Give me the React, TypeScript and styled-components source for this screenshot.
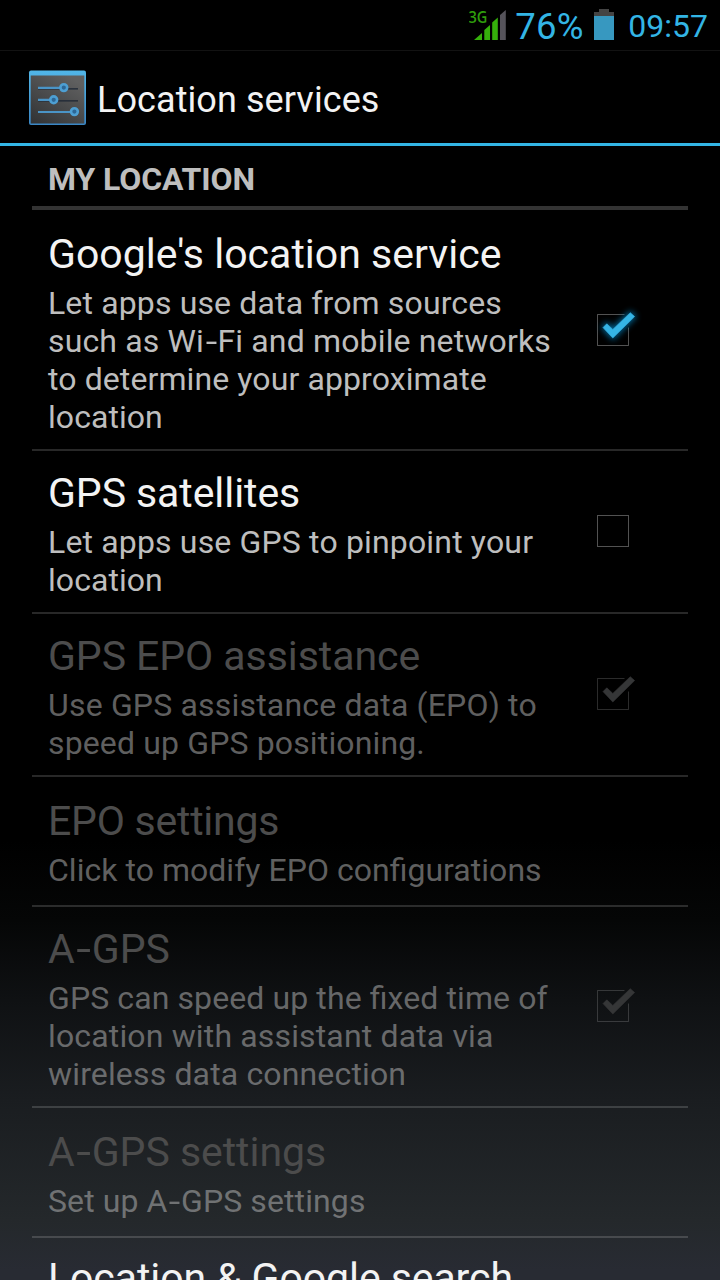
import React from 'react';
import styled, { createGlobalStyle } from 'styled-components';

const Global = createGlobalStyle`
  * { box-sizing: border-box; }
  html, body { margin: 0; background: #000; overflow: hidden; }
`;

const Screen = styled.div`
  width: 720px;
  height: 1280px;
  overflow: hidden;
  display: flex;
  flex-direction: column;
  font-family: Roboto, sans-serif;
  color: #f3f3f3;
  background: linear-gradient(180deg, #000 0, #000 840px, #050606 920px, #0f1113 1000px, #1a1d20 1100px, #24282b 1220px, #282b33 1270px, #282b33 1280px);
`;

const StatusBar = styled.div`
  height: 51px;
  flex: none;
  display: flex;
  justify-content: flex-end;
  align-items: center;
  padding-right: 12px;
  background: #000;
  border-bottom: 1px solid #121212;
  color: #33b5e5;
`;

const Signal = styled.svg`
  width: 38px;
  height: 50px;
  margin-right: 8px;
`;

const Percent = styled.span`
  font-size: 36.5px;
  width: 69px;
  line-height: 46px;
  padding-top: 4px;
  letter-spacing: 0.2px;
  white-space: nowrap;
`;

const Battery = styled.svg`
  width: 20px;
  height: 32px;
  margin: 0 14px 0 10px;
`;

const Clock = styled.span`
  font-size: 32px;
  line-height: 48px;
  padding-top: 1px;
`;

const ActionBar = styled.header`
  height: 95px;
  flex: none;
  display: flex;
  align-items: center;
  padding-left: 28px;
  background: #000;
  border-bottom: 3px solid #33b5e5;
`;

const AppIcon = styled.svg`
  width: 58px;
  height: 58px;
  margin-right: 11px;
`;

const Title = styled.h1`
  margin: 0;
  padding-top: 6px;
  font-size: 36px;
  font-weight: 400;
  line-height: 48px;
  letter-spacing: 0.08px;
`;

const List = styled.main`
  flex: 1;
  min-height: 0;
  padding: 0 32px;
`;

const Category = styled.h2`
  margin: 0;
  height: 64px;
  padding: 14px 16px 0;
  font-size: 32px;
  line-height: 38px;
  font-weight: 700;
  letter-spacing: -0.1px;
  color: #bebebe;
  border-bottom: 4px solid #333;
`;

const Row = styled.section<{ $h: number; $single?: boolean }>`
  height: ${(p) => p.$h}px;
  display: flex;
  align-items: ${(p) => (p.$single ? 'flex-start' : 'center')};
  padding-top: ${(p) => (p.$single ? 12 : 0)}px;
  padding-left: 16px;
  border-bottom: 2px solid rgba(255, 255, 255, 0.157);

  &:first-of-type {
    padding-top: 2px;
  }
`;

const Copy = styled.div`
  flex: 1;
  padding-top: 3px;
  white-space: nowrap;
  font-feature-settings: 'liga' 1;
`;

const Name = styled.div<{ $off?: boolean; $track?: number }>`
  margin-bottom: 5px;
  font-size: 41px;
  line-height: 50px;
  letter-spacing: ${(p) => p.$track ?? 0}px;
  color: ${(p) => (p.$off ? '#4c4c4c' : '#f3f3f3')};
`;

const Line = styled.div<{ $off?: boolean; $track: number }>`
  font-size: 32px;
  line-height: 38px;
  letter-spacing: ${(p) => p.$track}px;
  color: ${(p) => (p.$off ? 'rgba(190, 190, 190, 0.5)' : '#bebebe')};
`;

const Hyphen = styled.span`
  display: inline-block;
  margin: 0 0.06em 0 0.08em;
  transform: scaleX(1.3);
`;

const CheckBox = styled.svg`
  width: 64px;
  height: 64px;
  margin: 0 43px 4px 0;
  overflow: visible;
`;

const Glow = styled.path`
  filter: blur(3px);
`;

function Text({ children }: { children: string }) {
  const parts = children.split('-');
  return (
    <>
      {parts.map((part, i) => (
        <React.Fragment key={i}>
          {i > 0 && <Hyphen>-</Hyphen>}
          {part}
        </React.Fragment>
      ))}
    </>
  );
}

const TICK = 'M22 30.6 L25.8 26.8 L31.8 32.4 L49.3 15.7 L53.6 19.6 L31.8 41 Z';

function Check({ checked, off }: { checked: boolean; off?: boolean }) {
  const line = off ? 'rgba(255,255,255,0.17)' : 'rgba(255,255,255,0.32)';
  return (
    <CheckBox viewBox="0 0 64 64" fill="none">
      {checked ? (
        <>
          <path d="M43.5 17.5 H16.5 V48.5 H47.5 V30.5" stroke={line} />
          {!off && <Glow d={TICK} fill="#0088c8" stroke="#0088c8" strokeWidth="3" opacity="0.75" />}
          <path d={TICK} fill={off ? '#353637' : '#35b4e5'} stroke={off ? '#353637' : '#35b4e5'} strokeWidth="0.6" />
        </>
      ) : (
        <rect x="16.5" y="17.5" width="31" height="31" stroke={line} />
      )}
    </CheckBox>
  );
}

type Item = {
  name: string;
  track?: number;
  lines: [string, number][];
  h: number;
  off?: boolean;
  box?: 'on' | 'off';
};

const items: Item[] = [
  {
    name: "Google's location service",
    track: 0.02,
    lines: [
      ['Let apps use data from sources', 0.14],
      ['such as Wi-Fi and mobile networks', 0.15],
      ['to determine your approximate', 0.1],
      ['location', 0.05],
    ],
    h: 241,
    box: 'on',
  },
  {
    name: 'GPS satellites',
    track: -0.07,
    lines: [['Let apps use GPS to pinpoint your', 0.16], ['location', 0.05]],
    h: 163,
    box: 'off',
  },
  {
    name: 'GPS EPO assistance',
    track: -0.06,
    lines: [['Use GPS assistance data (EPO) to', 0.18], ['speed up GPS positioning.', 0.14]],
    h: 163,
    off: true,
    box: 'on',
  },
  {
    name: 'EPO settings',
    track: -0.24,
    lines: [['Click to modify EPO configurations', 0.03]],
    h: 130,
    off: true,
  },
  {
    name: 'A-GPS',
    lines: [
      ['GPS can speed up the fixed time of', 0.1],
      ['location with assistant data via', 0.15],
      ['wireless data connection', 0.15],
    ],
    h: 201,
    off: true,
    box: 'on',
  },
  { name: 'A-GPS settings', track: -0.04, lines: [['Set up A-GPS settings', 0.1]], h: 130, off: true },
];

export default function App() {
  return (
    <Screen>
      <Global />
      <StatusBar>
        <Signal viewBox="0 0 38 50">
          <text x="-0.5" y="22.7" fontFamily="'Open Sans', 'Noto Sans', sans-serif" fontSize="17" fontWeight="600" textLength="19" lengthAdjust="spacingAndGlyphs" fill="#2f9d0c">3G</text>
          <path d="M5 40 L13 33 V40 Z M15.3 40 V30 L21 25 V40 Z M23.2 40 V22.5 L28.8 17.5 V40 Z" fill="#35b00b" />
          <path d="M31 40 V15 L36.8 10 V40 Z" fill="#55535a" />
        </Signal>
        <Percent>76%</Percent>
        <Battery viewBox="0 0 20 32">
          <path d="M5 0h10v3h5v4H0V3h5z" fill="#444" />
          <path d="M0 7h20v24H0z" fill="#3798c0" />
        </Battery>
        <Clock>09:57</Clock>
      </StatusBar>
      <ActionBar>
        <AppIcon viewBox="0 0 58 58">
          <defs>
            <linearGradient id="panel" x1="0" y1="1" x2="0.7" y2="0">
              <stop offset="0" stopColor="#303234" />
              <stop offset="1" stopColor="#606060" />
            </linearGradient>
            <linearGradient id="edge" x1="0" y1="0" x2="0" y2="1">
              <stop offset="0" stopColor="#51b6e8" />
              <stop offset="1" stopColor="#3a86c4" />
            </linearGradient>
          </defs>
          <rect x="1" y="2.5" width="57" height="54.5" rx="2" fill="url(#edge)" />
          <rect x="2.7" y="7.5" width="53.6" height="48" fill="url(#panel)" />
          <path d="M10 20.9H50M10 32.9H50" stroke="#1d2635" strokeWidth="1.2" />
          <path d="M10 19.9H36M10 31.9H26M10 44H46" stroke="#4a94c6" strokeWidth="2.2" />
          <g fill="#2d6796" stroke="#4d9fd3" strokeWidth="2.6">
            <circle cx="35.8" cy="19.6" r="3.4" />
            <circle cx="25.7" cy="31.8" r="3.4" />
            <circle cx="46.4" cy="43.6" r="3.4" />
          </g>
        </AppIcon>
        <Title>Location services</Title>
      </ActionBar>
      <List>
        <Category>MY LOCATION</Category>
        {items.map((it) => (
          <Row key={it.name} $h={it.h}>
            <Copy>
              <Name $off={it.off} $track={it.track}><Text>{it.name}</Text></Name>
              {it.lines.map(([line, track]) => (
                <Line key={line} $off={it.off} $track={track}><Text>{line}</Text></Line>
              ))}
            </Copy>
            {it.box && <Check checked={it.box === 'on'} off={it.off} />}
          </Row>
        ))}
        <Row $h={130} $single>
          <Copy><Name $track={-0.08}>Location &amp; Google search</Name></Copy>
        </Row>
      </List>
    </Screen>
  );
}
